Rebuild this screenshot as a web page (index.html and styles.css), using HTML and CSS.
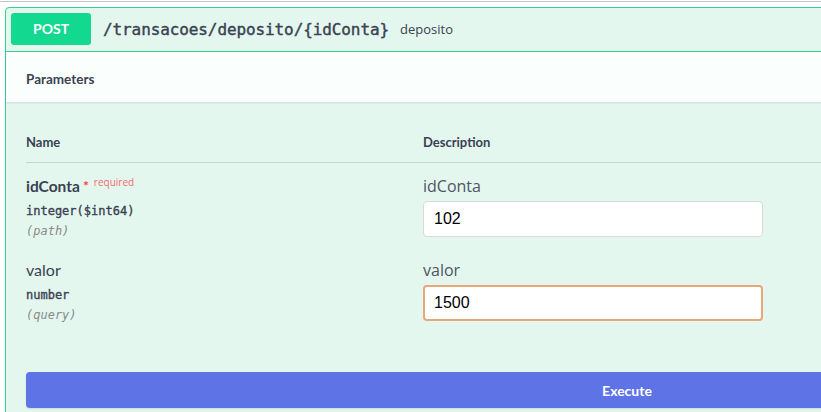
FILE: index.html
```html
<!DOCTYPE html>
<html>
<head>
<meta charset="utf-8">
<link rel="stylesheet" href="styles.css">
</head>
<body>
<div class="topline"></div>
<div class="viewport">
  <div class="opblock">
    <div class="summary">
      <span class="method">POST</span>
      <span class="path">/transacoes/deposito/{idConta}</span>
      <span class="desc">deposito</span>
    </div>
    <div class="section-header">
      <h4 class="section-title">Parameters</h4>
    </div>
    <div class="params">
      <div class="row head">
        <div class="col-name">Name</div>
        <div class="col-desc">Description</div>
      </div>
      <div class="row">
        <div class="col-name">
          <div class="pname required">idConta<span class="star">*</span><span class="req">required</span></div>
          <div class="ptype">integer($int64)</div>
          <div class="pin">(path)</div>
        </div>
        <div class="col-desc">
          <div class="label">idConta</div>
          <input class="field" type="text" value="102">
        </div>
      </div>
      <div class="row">
        <div class="col-name">
          <div class="pname">valor</div>
          <div class="ptype">number</div>
          <div class="pin">(query)</div>
        </div>
        <div class="col-desc">
          <div class="label">valor</div>
          <input class="field focus" type="text" value="1500">
        </div>
      </div>
    </div>
    <div class="execute-wrap">
      <button class="execute">Execute</button>
    </div>
  </div>
</div>
</body>
</html>
```

FILE: styles.css
```css
html, body {
  margin: 0;
  padding: 0;
  background: #ffffff;
  overflow: hidden;
}
.topline {
  height: 1px;
  margin-top: 1px;
  background: #c6c6c6;
}
.viewport {
  width: 821px;
  overflow: hidden;
  padding-top: 5px;
}
.opblock {
  margin-left: 5px;
  width: 1260px;
  border: 1px solid #33cf95;
  border-radius: 4px;
  background: #e3f7ef;
  color: #3b4151;
  min-height: 420px;
}
.summary {
  display: flex;
  align-items: center;
  padding: 5px 5px 6px;
  border-bottom: 1px solid #33cf95;
}
.method {
  width: 80px;
  height: 32px;
  border-radius: 3px;
  background: #13d890;
  color: #fff;
  font: 700 14px/32px Lato, "Noto Sans", sans-serif;
  text-align: center;
}
.path {
  margin-left: 12px;
  font: 400 16px "DejaVu Sans Mono", monospace;
  -webkit-text-stroke: 0.4px #3b4151;
  color: #3b4151;
  letter-spacing: -0.1px;
}
.desc {
  margin-left: 11px;
  font: 400 13px "Open Sans", sans-serif;
  color: #3b4151;
}
.section-header {
  height: 50px;
  display: flex;
  align-items: center;
  padding: 3px 20px 0;
  box-sizing: border-box;
  background: rgba(255, 255, 255, 0.8);
  box-shadow: 0 1px 2px rgba(0, 0, 0, 0.1);
}
.section-title {
  margin: 0;
  font: 700 13.5px Lato, "Noto Sans", sans-serif;
  color: #3b4151;
}
.params {
  padding: 20px 20px 0;
}
.row {
  display: grid;
  grid-template-columns: 397px 1fr;
  padding: 11px 0 8px;
}
.row.head {
  padding: 12px 0 12px;
  border-bottom: 1px solid #c3d6cf;
  font: 700 13px/16px Lato, "Noto Sans", sans-serif;
}
.pname {
  font: 400 16px/24px Lato, "Noto Sans", sans-serif;
}
.pname.required {
  font-weight: 700;
  font-size: 15.5px;
}
.star {
  color: #f93e3e;
  font-size: 14px;
  margin-left: 3px;
  vertical-align: 1px;
}
.req {
  color: #f76b6b;
  font: 400 10px "Open Sans", sans-serif;
  vertical-align: 6px;
  margin-left: 5px;
}
.ptype {
  margin-top: 5px;
  font: 400 12px/16px "DejaVu Sans Mono", monospace;
  -webkit-text-stroke: 0.35px #3b4151;
  color: #3b4151;
}
.pin {
  margin-top: 4px;
  font: italic 400 12px/16px "DejaVu Sans Mono", monospace;
  color: #8a8a8a;
}
.label {
  font: 400 16px/24px "Open Sans", sans-serif;
  color: #50545f;
}
.field {
  display: block;
  box-sizing: border-box;
  margin-top: 3px;
  width: 340px;
  height: 36px;
  padding: 0 10px;
  border: 1px solid #d9d9d9;
  border-radius: 4px;
  background: #fff;
  font: 400 16px "Liberation Sans", Arial, sans-serif;
  color: #000;
  outline: none;
}
.field.focus {
  border: 2px solid #e9a57b;
  padding: 0 9px;
}
.execute-wrap {
  padding: 41px 20px 20px;
}
.execute {
  display: block;
  width: 1202px;
  height: 36px;
  border: none;
  border-radius: 4px;
  background: #5d73e6;
  color: #fff;
  font: 700 14px Lato, "Noto Sans", sans-serif;
  box-shadow: 0 1px 2px rgba(0, 0, 0, 0.1);
}
```
